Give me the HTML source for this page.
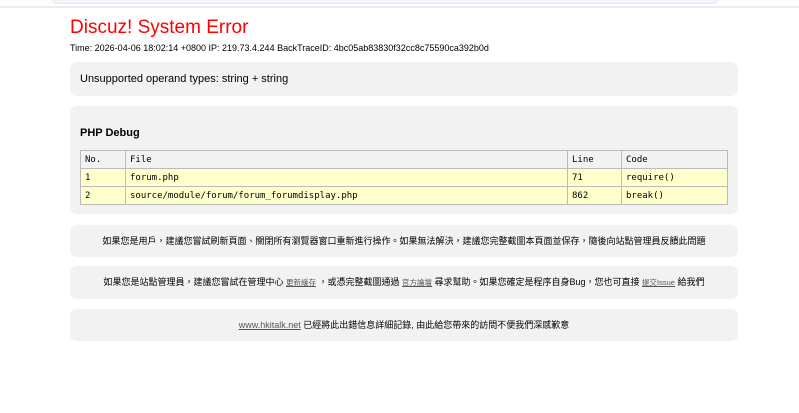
<!DOCTYPE html>
<html><head><meta charset="utf-8"><style>
html,body{margin:0;padding:0;background:#fff;width:799px;height:413px;overflow:hidden;}
body{font-family:"Liberation Sans","Noto Sans CJK TC",sans-serif;color:#000;position:relative;}
.topbar{position:absolute;left:52px;top:-6px;width:665px;height:8px;background:#f1f4fb;border:1px solid #e4e8f2;border-radius:5px;}
.line{position:absolute;left:0;top:6px;width:799px;height:2px;background:#ececec;}
.wrap{position:absolute;left:70px;top:0;width:668px;}
h1{position:absolute;left:0;top:17px;margin:0;font-size:19px;font-weight:normal;color:#f00;}
.info{position:absolute;left:0;top:43px;font-size:9px;white-space:nowrap;}
.box{position:absolute;left:0;width:668px;background:#f2f2f2;border-radius:7px;}
.msg{top:62px;height:34px;font-size:11px;line-height:34px;padding-left:10px;box-sizing:border-box;}
.dbg{top:106px;height:108px;}
.dbg h3{position:absolute;left:10px;top:21px;margin:0;font-size:11px;font-weight:bold;}
table{position:absolute;left:10px;top:44px;width:648px;border-collapse:collapse;font-family:"DejaVu Sans Mono","Liberation Mono",monospace;font-size:9px;}
td{border:1px solid #bbb;height:18px;padding:0 4px;box-sizing:border-box;}
tr.h td{background:#f2f2f2;}
tr.y td{background:#ffffcc;}
.c{text-align:center;font-size:9px;}
.c a{color:#555;text-decoration:underline;font-size:7.5px;}
</style></head><body>
<div class="topbar"></div><div class="line"></div>
<div class="wrap">
<h1>Discuz! System Error</h1>
<div class="info">Time: 2026-04-06 18:02:14 +0800 IP: 219.73.4.244 BackTraceID: 4bc05ab83830f32cc8c75590ca392b0d</div>
<div class="box msg">Unsupported operand types: string + string</div>
<div class="box dbg"><h3>PHP Debug</h3>
<table>
<tr class="h"><td style="width:45px">No.</td><td style="width:442px">File</td><td style="width:54px">Line</td><td>Code</td></tr>
<tr class="y"><td>1</td><td>forum.php</td><td>71</td><td>require()</td></tr>
<tr class="y"><td>2</td><td>source/module/forum/forum_forumdisplay.php</td><td>862</td><td>break()</td></tr>
</table></div>
<div class="box c" style="top:225px;height:32px;line-height:32px;">如果您是用戶，建議您嘗試刷新頁面、關閉所有瀏覽器窗口重新進行操作。如果無法解決，建議您完整截圖本頁面並保存，隨後向站點管理員反饋此問題</div>
<div class="box c" style="top:266px;height:33px;line-height:33px;">如果您是站點管理員，建議您嘗試在管理中心 <a>更新緩存</a> ，或憑完整截圖通過 <a>官方論壇</a> 尋求幫助。如果您確定是程序自身Bug，您也可直接 <a>提交Issue</a> 給我們</div>
<div class="box c" style="top:309px;height:32px;line-height:32px;"><a style="font-size:9px">www.hkitalk.net</a> 已經將此出錯信息詳細記錄, 由此給您帶來的訪問不便我們深感歉意</div>
</div>
</body></html>
